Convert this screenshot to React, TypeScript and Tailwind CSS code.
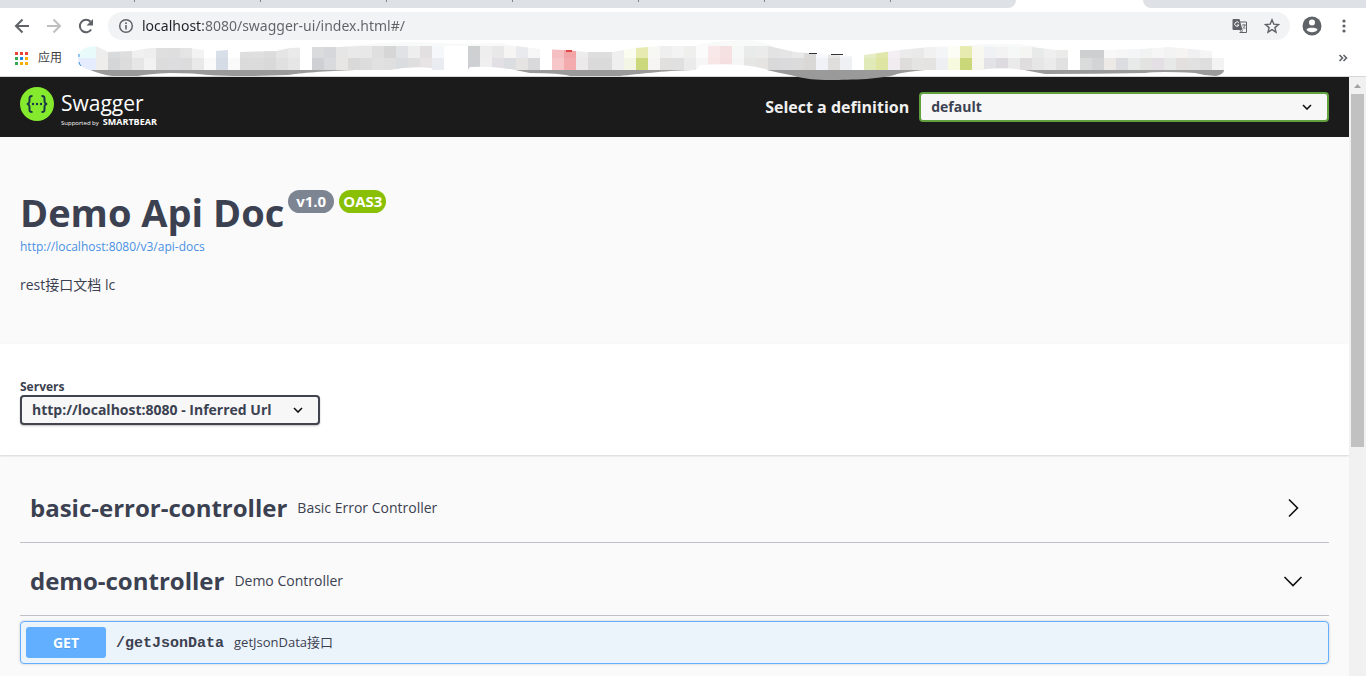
import React, { useState } from 'react';

interface Tag {
  name: string;
  description: string;
}

// Pixelated bookmark tiles: [upper colour, lower colour], 12px per column
const tiles: [string, string][] = [
  ['#e8fafa', '#e4ecfd'], ['#eeedee', '#eeedec'], ['#d9dadb', '#d5d6d7'], ['#dededf', '#dcdcdc'],
  ['#f0f0f0', '#e6e6e7'], ['#eeeeee', '#f2f2f3'], ['#dfdfe0', '#dcdcdd'], ['#dedede', '#dddddf'],
  ['#e4e4e5', '#dddcdc'], ['#f3f3f3', '#e9e9ea'], ['#ffffff', '#fafafa'], ['#d8dfe8', '#d5dce6'],
  ['#ffffff', '#fafafa'], ['#dfdede', '#dbdbdb'], ['#e0dfdf', '#dcdbdc'], ['#dddcdc', '#dad9d9'],
  ['#e5e5e5', '#e0e0e0'], ['#eaeaea', '#e6e6e6'], ['#ffffff', '#ffffff'], ['#dadbdd', '#cfd0d4'],
  ['#d6d7db', '#d9dadc'], ['#e6e6e6', '#e8e6e5'], ['#e9e9e9', '#d9d9da'], ['#e8e8e8', '#dcdcdd'],
  ['#dfdfe0', '#e1e1e2'], ['#d6d6d7', '#dfdfe0'], ['#e0e2e5', '#dadddf'], ['#eeeeef', '#e0dfe0'],
  ['#e2e0e1', '#e8e4e5'], ['#f5f7fa', '#e9edf2'], ['#ffffff', '#ffffff'], ['#ffffff', '#ffffff'],
  ['#cfd0d2', '#cdcfd3'], ['#eeeeee', '#efefef'], ['#e8e8e8', '#e2e0e5'],
  ['#f7f5f3', '#dbdde1'], ['#e8eaed', '#e5e4e3'], ['#f6f6f6', '#d9d9db'], ['#ffffff', '#ffffff'],
  ['#f5bfc2', '#f6c6c8'], ['#f3a4a6', '#f4abad'], ['#ececec', '#ebe9e9'], ['#dededf', '#dbdadb'],
  ['#dededf', '#dbdadb'], ['#efeff0', '#efeff0'], ['#fafcf0', '#f3f6e4'], ['#e7ebb2', '#cbd87c'],
  ['#f7f8f3', '#f6f5f3'], ['#efefef', '#e2e0de'], ['#f3f3f3', '#e0e0e1'], ['#efefee', '#ebebeb'],
  ['#fbfbfb', '#f6f6f6'], ['#f8e8e9', '#f8e6e7'], ['#f5e1e2', '#f6dfe0'], ['#f6f7f7', '#f5f5f5'],
  ['#e9ebeb', '#e6e6e5'], ['#ebebec', '#e6e4e3'], ['#e3e3e4', '#d9d9da'], ['#e5e5e6', '#dadadc'],
  ['#e9e9ea', '#dbdbdc'], ['#dcdad9', '#dad8d6'], ['#f6f8fb', '#f0f2f7'], ['#e8e7e7', '#e0dedd'],
  ['#f4f5f8', '#eff0f3'], ['#ffffff', '#ffffff'], ['#e6edc4', '#e0e9b8'], ['#e1e7ab', '#dee4a2'],
  ['#f3eff3', '#f0ecef'], ['#ebebeb', '#dfdcdc'], ['#e9e9e9', '#e4e4e2'], ['#f1f1f1', '#e4e3e1'],
  ['#f4f5f7', '#eeeff3'], ['#fcfdf5', '#f8fae0'], ['#e7ebaf', '#cbd87a'], ['#f8f8f0', '#f6f5ee'],
  ['#f0f1f4', '#e3e3e5'], ['#f4f3f4', '#dddbdf'], ['#f6f8f7', '#eaeaeb'], ['#f5f5f4', '#e0dddf'],
  ['#e8eae9', '#e6e6e6'], ['#efefef', '#ebebeb'], ['#ebebea', '#e1e1e1'], ['#ffffff', '#ffffff'],
  ['#cecfd1', '#dadcdb'], ['#cecfd1', '#d3d4d6'], ['#f8f8f8', '#ede9e7'], ['#f5f6f5', '#dbdde1'],
  ['#f4f5f6', '#e8eae9'], ['#f0f3f1', '#e3e4e2'], ['#f5f6f5', '#e3dfe4'], ['#f3f3f3', '#e7e8e8'],
  ['#f5f4f2', '#e2dfde'], ['#f0f0f2', '#e0e1e0'], ['#f5f5f5', '#dedede'], ['#ffffff', '#f3f3f3'],
];

const appColors = ['#ea4335', '#ea4335', '#ea4335', '#34a853', '#1a88e8', '#f5ad00', '#34a853', '#f5ad00', '#f5ad00'];

const tags: Tag[] = [
  { name: 'basic-error-controller', description: 'Basic Error Controller' },
  { name: 'demo-controller', description: 'Demo Controller' },
];

const BlurredBookmarks: React.FC = () => (
  <svg width="1148" height="42" viewBox="78 38 1148 42" className="absolute left-[78px] -top-1.5" aria-hidden="true">
    <defs>
      <clipPath id="tiles">
        <path d="M78 58C78 50 86 46 96 46L108 52L132 51L150 48L190 48L204 50L216 51L228 50L240 52L276 51L290 48L312 47L340 47L360 46L516 46L540 49L564 50L588 52L612 52L636 48L660 46L768 46L795 52L830 55L852 56L864 55L900 50L930 47L960 46L1032 47L1056 50L1104 50L1140 49L1170 47L1212 51L1224 58V70H90C82 68 78 64 78 58Z" />
      </clipPath>
    </defs>
    <path d="M340 47Q380 42 420 42Q460 45 500 43L520 47Z M690 47Q715 40 745 40Q760 40 775 47Z M960 46Q1010 41 1040 47Z" fill="#f8faf9" />
    <g clipPath="url(#tiles)" shapeRendering="crispEdges">
      {tiles.map(([top, bottom], i) => (
        <React.Fragment key={i}>
          <rect x={i === 0 ? 78 : 84 + i * 12} y="46" width={i === 0 ? 18 : 12} height="12" fill={top} />
          <rect x={i === 0 ? 78 : 84 + i * 12} y="58" width={i === 0 ? 18 : 12} height="12" fill={bottom} />
        </React.Fragment>
      ))}
    </g>
    <g fill="#999a99">
      <path d="M90 70H355C325 71 300 73 288 75Q240 77 208 75Q195 73 170 73Q148 74 138 76H112C104 75 96 72 90 70Z" />
      <path d="M515 70H693C660 71 640 74 620 76H570Q560 73 530 73Z" />
      <path d="M767 70H925Q905 72 897 74C885 79 850 80 830 80C800 80 795 75 780 73Z" />
      <path d="M1024 70H1224Q1224 74 1216 76Q1206 76 1195 73Q1160 71 1145 73Q1095 74 1045 74Z" />
    </g>
    <g fill="#fff">
      <path d="M390 70Q410 66 432 68V70Z M470 67Q490 66 516 70H468Z M700 65Q745 62 768 70H696Z M985 69Q1010 67 1022 70H984Z" />
    </g>
    <path d="M809 53.500h8M831 54.500h12" stroke="#333" strokeWidth="1" />
    <path d="M566 51h6" stroke="#e04545" strokeWidth="2" />
    <path d="M79 54V57M79 62Q79 64 81 66" stroke="#3b8be8" strokeWidth="1" fill="none" />
  </svg>
);

const BrowserChrome: React.FC = () => {
  const [url, setUrl] = useState('localhost:8080/swagger-ui/index.html#/');

  return (
    <header className="shrink-0 border-b border-[#d5d7da] bg-white font-['Noto_Sans','Noto_Sans_CJK_SC',sans-serif]">
      {/* Bottom edge of the tab strip */}
      <div className="flex h-2">
        <div className="flex flex-1 overflow-hidden rounded-br-lg bg-[#dee1e6] pl-[9px]">
          {Array.from({ length: 7 }).map((_, i) => (
            <span key={i} className="h-0.5 w-[126px] shrink-0 border-r border-[#808387]"></span>
          ))}
        </div>
        <div className="w-[127px]"></div>
        <div className="w-[223px] rounded-bl-lg bg-[#dee1e6]"></div>
      </div>

      <div className="flex h-9 items-center pr-3.5 pl-3.5 text-[#5f6368]">
        <button aria-label="Back" className="mr-4">
          <svg width="16" height="16" viewBox="0 0 16 16" fill="none" stroke="currentColor" strokeWidth="2">
            <path d="M15 8H2.5M8.5 1.5L2 8l6.5 6.5" />
          </svg>
        </button>
        <button aria-label="Forward" className="mr-4 text-[#bdbfc1]">
          <svg width="16" height="16" viewBox="0 0 16 16" fill="none" stroke="currentColor" strokeWidth="2">
            <path d="M1 8h12.500M7.500 1.500L14 8l-6.500 6.500" />
          </svg>
        </button>
        <button aria-label="Reload" className="mr-3.5">
          <svg width="16" height="16" viewBox="0 0 16 16">
            <path d="M13.200 11.500A6.200 6.200 0 1 1 12.600 3.800" fill="none" stroke="currentColor" strokeWidth="2" />
            <path d="M15 1v6.500H8.500z" fill="currentColor" />
          </svg>
        </button>
        <div className="flex h-7 flex-1 items-center rounded-full bg-[#f1f3f4] pr-2.5 pl-2.5">
          <svg width="16" height="16" viewBox="0 0 16 16" fill="none" stroke="currentColor" className="mr-2 shrink-0">
            <circle cx="8" cy="8" r="6.300" strokeWidth="1.500" />
            <path d="M8 7v4.500M8 4.300v1.700" strokeWidth="1.600" />
          </svg>
          <input
            aria-label="Address"
            value={url}
            onChange={(e) => setUrl(e.target.value)}
            className="min-w-0 flex-1 bg-[linear-gradient(90deg,#202124_61px,#5f6368_61px)] bg-clip-text text-sm leading-5 text-transparent caret-black outline-none"
          />
          <button aria-label="Translate" className="mr-4">
            <svg width="16" height="16" viewBox="0 0 16 16">
              <path d="M7 4h7.500v10.500H7.500" fill="none" stroke="currentColor" />
              <path d="M1.500 1h6l3 11H1.500A1 1 0 0 1 .5 11V2a1 1 0 0 1 1-1z" fill="currentColor" />
              <path d="M6.800 4.800A2.200 2.200 0 1 0 7 7H5" fill="none" stroke="#fff" />
              <path d="M10 7h4M12 6v1M13 7q-1 3-2.500 4M11 8.500l2.500 2.500M8 12l1.500 2.500 1-2.500" fill="none" stroke="currentColor" strokeWidth=".8" />
            </svg>
          </button>
          <button aria-label="Bookmark this page">
            <svg width="16" height="16" viewBox="0 0 16 16" fill="none" stroke="currentColor" strokeWidth="1.400">
              <path d="M8 1.800l1.800 4.300 4.700.4-3.600 3.100 1.100 4.600L8 11.700l-4 2.500 1.100-4.600L1.500 6.500l4.700-.4z" />
            </svg>
          </button>
        </div>
        <button aria-label="Profile" className="ml-3">
          <svg width="20" height="20" viewBox="0 0 20 20">
            <circle cx="10" cy="10" r="9.500" fill="currentColor" />
            <circle cx="10" cy="6.500" r="3" fill="#fff" />
            <path d="M4.500 13.500C5 11 15 11 15.500 13.500C14 17 6 17 4.500 13.500z" fill="#fff" />
          </svg>
        </button>
        <button aria-label="Menu" className="ml-3.5">
          <svg width="16" height="16" viewBox="0 0 16 16" fill="currentColor">
            <circle cx="8" cy="3" r="1.600" />
            <circle cx="8" cy="8" r="1.600" />
            <circle cx="8" cy="13" r="1.600" />
          </svg>
        </button>
      </div>

      <div className="relative flex h-8 items-center justify-between pr-[18px] pb-1 pl-[15px]">
        <button className="flex items-center gap-2.5 text-xs text-[#3c4043]">
          <span className="grid grid-cols-3 gap-0.5">
            {appColors.map((color, i) => (
              <span key={i} className="size-[3px]" style={{ backgroundColor: color }}></span>
            ))}
          </span>
          应用
        </button>
        <BlurredBookmarks />
        <button aria-label="More bookmarks">
          <svg width="10" height="8" viewBox="0 0 10 8" fill="none" stroke="#5f6368" strokeWidth="1.600">
            <path d="M1.500 1l3 3-3 3M5.500 1l3 3-3 3" />
          </svg>
        </button>
      </div>
    </header>
  );
};

const SwaggerLogo: React.FC = () => (
  <a href="#/" className="flex items-center text-white">
    <svg width="34" height="34" viewBox="0 0 34 34" className="mr-[7px] mb-1.5">
      <circle cx="17" cy="17" r="17" fill="#85ea2d" />
      <g fill="none" stroke="#173647" strokeWidth="2">
        <path d="M12.500 9C9.500 9 9.500 10 9.500 12.500C9.500 15.500 9.500 16.500 7 17C9.500 17.500 9.500 18.500 9.500 21.500C9.500 24 9.500 25 12.500 25" />
        <path d="M21.500 9C24.500 9 24.500 10 24.500 12.500C24.500 15.500 24.500 16.500 27 17C24.500 17.500 24.500 18.500 24.500 21.500C24.500 24 24.500 25 21.500 25" />
      </g>
      <g fill="#173647">
        <circle cx="13" cy="17" r="1.200" />
        <circle cx="17" cy="17" r="1.200" />
        <circle cx="21" cy="17" r="1.200" />
      </g>
    </svg>
    <span className="flex flex-col pt-1">
      <span className="text-[21px] leading-[26px]">Swagger</span>
      <span className="flex items-baseline gap-1 leading-3">
        <span className="text-[6px]">Supported by</span>
        <span className="text-[9px] font-bold">SMARTBEAR</span>
      </span>
    </span>
  </a>
);

const SelectArrow: React.FC = () => (
  <svg width="10" height="6" viewBox="0 0 10 6" fill="none" stroke="#111" strokeWidth="1.600" className="pointer-events-none absolute top-3 right-[17px]">
    <path d="M1 1l4 4 4-4" />
  </svg>
);

const TopBar: React.FC = () => (
  <div className="flex h-15 items-center justify-between bg-[#1b1b1b] px-5">
    <SwaggerLogo />
    <div className="flex items-center gap-2.5">
      <label htmlFor="definition" className="text-base font-bold text-[#f0f0f0]">
        Select a definition
      </label>
      <div className="relative w-[30vw]">
        <select
          id="definition"
          className="h-[30px] w-full appearance-none rounded border-2 border-[#62a03f] bg-[#f7f7f7] px-2.5 text-sm leading-5 font-bold text-[#3b4151]"
        >
          <option>default</option>
        </select>
        <SelectArrow />
      </div>
    </div>
  </div>
);

const ApiInfo: React.FC = () => (
  <section className="px-5 pt-[50px] pb-[49px]">
    <h2 className="flex items-start text-[38px] leading-[50px] font-bold">
      Demo Api Doc
      <span className="mt-[3px] ml-1 flex gap-[5px] text-[15px] leading-[23px] text-white">
        <span className="rounded-full bg-[#7d8492] px-2">v1.0</span>
        <span className="rounded-full bg-[#89bf04] px-1">OAS3</span>
      </span>
    </h2>
    <a href="http://localhost:8080/v3/api-docs" className="block text-xs leading-5 text-[#4990e2]">
      http://localhost:8080/v3/api-docs
    </a>
    <p className="mt-[18px] text-sm leading-5">rest接口文档 lc</p>
  </section>
);

const Servers: React.FC = () => (
  <section className="bg-white px-5 pt-[34px] pb-[30px] shadow-[0_1px_2px_rgba(0,0,0,0.15)]">
    <label htmlFor="servers" className="block text-xs leading-[17px] font-bold">
      Servers
    </label>
    <div className="relative w-[300px]">
      <select
        id="servers"
        className="block h-[30px] w-full appearance-none rounded border-2 border-[#41444e] bg-[#f7f7f7] pr-8 pl-2.5 text-sm leading-5 font-bold text-[#3b4151] shadow-[0_1px_2px_rgba(0,0,0,0.25)]"
      >
        <option>http://localhost:8080 - Inferred Url</option>
      </select>
      <SelectArrow />
    </div>
  </section>
);

const App: React.FC = () => {
  const [opened, setOpened] = useState<string[]>(['demo-controller']);

  const toggle = (name: string) => {
    setOpened((prev) => (prev.includes(name) ? prev.filter((n) => n !== name) : [...prev, name]));
  };

  return (
    <div className="flex h-screen flex-col overflow-hidden bg-[#fafafa] font-['Open_Sans','Noto_Sans_CJK_SC',sans-serif] text-[#3b4151]">
      <BrowserChrome />

      <div className="flex min-h-0 flex-1">
        <main className="min-w-0 flex-1 overflow-hidden">
          <TopBar />
          <ApiInfo />
          <Servers />

          <section className="px-5 pt-[15px]">
            {tags.map((tag) => (
              <div key={tag.name}>
                <h3 className="border-b border-[#bfc1c6]">
                  <button
                    onClick={() => toggle(tag.name)}
                    aria-expanded={opened.includes(tag.name)}
                    className="flex h-[72px] w-full items-center gap-2.5 pt-1 pr-[26px] pl-2.5 text-left"
                  >
                    <span className="text-2xl font-bold">{tag.name}</span>
                    <span className="flex-1 text-sm">{tag.description}</span>
                    <svg width="20" height="20" viewBox="0 0 20 20" fill="none" stroke="#111" strokeWidth="1.600">
                      {opened.includes(tag.name) ? <path d="M1.500 6L10 14.500 18.500 6" /> : <path d="M6 1.500L14.500 10 6 18.500" />}
                    </svg>
                  </button>
                </h3>
              </div>
            ))}

            {opened.includes('demo-controller') && (
              <button className="mt-[5px] flex w-full items-center rounded border border-[#61affe] bg-[#ebf3fb] p-[5px] text-left shadow-[0_0_3px_rgba(0,0,0,0.19)]">
                <span className="w-20 rounded-[3px] bg-[#61affe] text-center text-sm leading-[31px] font-bold text-white [text-shadow:0_1px_0_rgba(0,0,0,0.1)]">
                  GET
                </span>
                <span className="px-2.5 pt-1 font-['Liberation_Mono',monospace] text-[15px] font-bold">/getJsonData</span>
                <span className="text-[13px]">getJsonData接口</span>
              </button>
            )}
          </section>
        </main>

        {/* Scrollbar */}
        <div className="flex w-[17px] flex-col bg-[#f1f1f1] px-0.5">
          <svg width="13" height="17" viewBox="0 0 13 17" fill="#a3a3a3">
            <path d="M6.500 7L10 11H3z" />
          </svg>
          <div className="h-[59%] bg-[#c1c1c1]"></div>
        </div>
      </div>
    </div>
  );
};

export default App;
